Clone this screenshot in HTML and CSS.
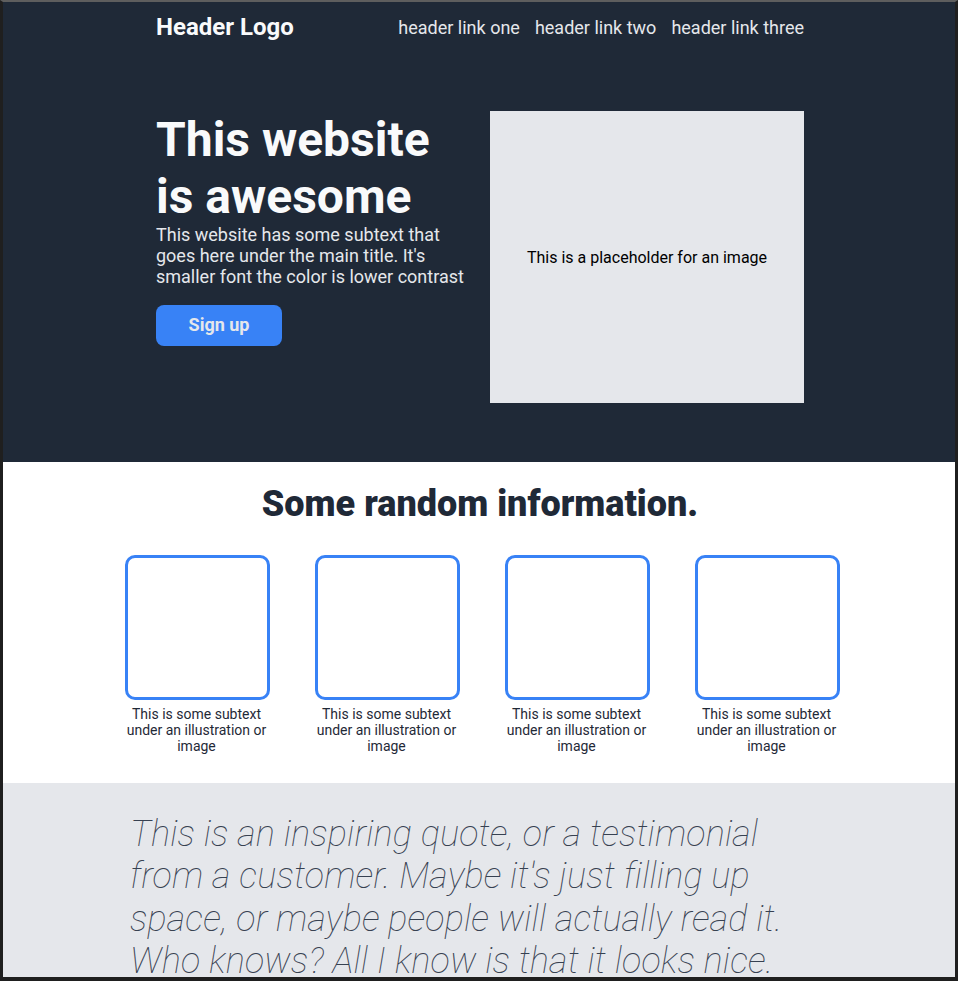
FILE: index.html
```html
<!DOCTYPE html>
<html lang="en">
<head>
<meta charset="utf-8">
<title>Landing page</title>
<link rel="stylesheet" href="styles.css">
</head>
<body>
<div class="window">
  <div class="top">
    <header class="header container">
      <div class="logo">Header Logo</div>
      <nav class="links">
        <a href="#">header link one</a>
        <a href="#">header link two</a>
        <a href="#">header link three</a>
      </nav>
    </header>
    <section class="hero container">
      <div class="hero-text">
        <h1 class="title">This website is awesome</h1>
        <p class="sub">This website has some subtext that goes here under the main title. It's smaller font the color is lower contrast</p>
        <button class="btn">Sign up</button>
      </div>
      <div class="placeholder">This is a placeholder for an image</div>
    </section>
  </div>
  <section class="info">
    <h2 class="info-title">Some random information.</h2>
    <div class="cards">
      <div class="card"><div class="box"></div><p class="caption">This is some subtext under an illustration or image</p></div>
      <div class="card"><div class="box"></div><p class="caption">This is some subtext under an illustration or image</p></div>
      <div class="card"><div class="box"></div><p class="caption">This is some subtext under an illustration or image</p></div>
      <div class="card"><div class="box"></div><p class="caption">This is some subtext under an illustration or image</p></div>
    </div>
  </section>
  <section class="quote-section">
    <p class="quote">This is an inspiring quote, or a testimonial from a customer. Maybe it's just filling up space, or maybe people will actually read it. Who knows? All I know is that it looks nice.</p>
  </section>
</div>
</body>
</html>
```
FILE: styles.css
```css
* { box-sizing: border-box; }
html, body { margin: 0; padding: 0; }
body {
  font-family: Roboto, "Liberation Sans", sans-serif;
  background: #1e1e1e;
}
.window {
  height: 981px;
  overflow: hidden;
  border-top: 2px solid #5e5e5e;
  border-left: 3px solid #1f1f1f;
  border-right: 3px solid #1f1f1f;
  border-bottom: 4px solid #1f1f1f;
  background: #fff;
}
.top {
  background: #1f2937;
  padding-bottom: 59px;
}
.container {
  width: 648px;
  margin: 0 auto;
  position: relative;
  left: 1px;
}
.header {
  display: flex;
  justify-content: space-between;
  align-items: center;
  padding: 11px 0 12px;
}
.logo {
  color: #f9fafb;
  font-size: 24px;
  font-weight: 700;
}
.links {
  display: flex;
  gap: 15px;
}
.links a {
  color: #e5e7eb;
  font-size: 18px;
  text-decoration: none;
}
.hero {
  display: flex;
  align-items: flex-start;
  gap: 16px;
  padding-top: 58px;
}
.hero-text {
  width: 318px;
}
.title {
  margin: 0 0 -1px;
  color: #f9fafb;
  font-size: 48px;
  font-weight: 700;
}
.sub {
  margin: 0;
  color: #e5e7eb;
  font-size: 18px;
}
.btn {
  margin-top: 18px;
  background: #3882f6;
  color: #e5e7eb;
  border: none;
  border-radius: 8px;
  font-family: inherit;
  font-size: 18px;
  font-weight: 700;
  padding: 9px 30px 11px;
  width: 126px;
  line-height: 21px;
}
.placeholder {
  width: 314px;
  height: 292px;
  background: #e5e7eb;
  display: flex;
  align-items: center;
  justify-content: center;
  color: #000;
  font-size: 16px;
}
.info {
  background: #fff;
  padding: 21px 0 29px;
}
.info-title {
  margin: 0 0 30px;
  text-align: center;
  color: #1f2937;
  font-size: 36px;
  font-weight: 900;
  position: relative;
  left: 1px;
}
.cards {
  display: flex;
  justify-content: center;
  gap: 45px;
  padding-left: 7px;
}
.card {
  width: 145px;
  display: flex;
  flex-direction: column;
  align-items: center;
}
.box {
  width: 145px;
  height: 145px;
  border: 3px solid #3882f6;
  border-radius: 10px;
}
.caption {
  margin: 6px -10px 0;
  text-align: center;
  color: #1f2937;
  font-size: 14px;
  position: relative;
  left: -1px;
}
.quote-section {
  background: #e5e7eb;
  padding: 30px 0 40px;
}
.quote {
  width: 698px;
  margin: 0 auto;
  color: #374151;
  font-size: 36px;
  line-height: 42.3px;
  letter-spacing: 0.14px;
  font-style: italic;
  font-weight: 100;
}
```
